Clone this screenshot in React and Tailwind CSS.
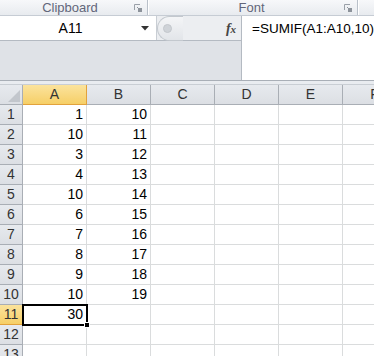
import React from 'react'

const font = { fontFamily: '"Liberation Sans", Arial, sans-serif' }

const cols = ['A', 'B', 'C', 'D', 'E', 'F']
const colA = [1, 10, 3, 4, 10, 6, 7, 8, 9, 10, 30]
const colB = [10, 11, 12, 13, 14, 15, 16, 17, 18, 19]

function Launcher() {
  return (
    <svg width="9" height="9" viewBox="0 0 9 9" className="shrink-0">
      <path d="M0.5 6V0.5H6" fill="none" stroke="#9aa0a8" />
      <rect x="4" y="4" width="4" height="4" fill="#8d939b" />
      <path d="M3 3L6 6" stroke="#8d939b" />
    </svg>
  )
}

function Ribbon() {
  return (
    <div className="flex h-[16px] bg-gradient-to-b from-[#f7f8fa] to-[#e8ebef] border-b border-[#c6ccd4] text-[13px] text-[#62667a]">
      <div className="w-[148px] shrink-0 flex items-center border-r border-[#b9c0c9]">
        <span className="flex-1 text-center leading-none pl-[6px]">Clipboard</span>
        <div className="mr-[4px] mt-[2px]"><Launcher /></div>
      </div>
      <div className="w-[1px] shrink-0 bg-white"></div>
      <div className="w-[209px] shrink-0 flex items-center border-r border-[#b9c0c9]">
        <span className="flex-1 text-center leading-none pl-[10px]">Font</span>
        <div className="mr-[4px] mt-[2px]"><Launcher /></div>
      </div>
      <div className="w-[1px] shrink-0 bg-white"></div>
      <div className="flex-1"></div>
    </div>
  )
}

function FormulaBar() {
  return (
    <div className="flex h-[65px] bg-[#dfe2e7] border-b border-[#a9afb7]">
      <div className="w-[241px] shrink-0 flex flex-col">
        <div className="flex h-[25px] border-b border-[#b4bac2]">
          <div className="w-[157px] bg-white flex items-center border-r border-[#c9ced4]">
            <span className="flex-1 text-center text-[14px] text-black">A11</span>
            <svg width="8" height="5" viewBox="0 0 8 5" className="mr-[7px]">
              <path d="M0 0H8L4 4.5Z" fill="#333" />
            </svg>
          </div>
          <div className="flex-1 flex items-center bg-[#eceef1]">
            <div className="h-[25px] w-[26px] rounded-l-full border-l border-y border-[#c3c8ce] bg-gradient-to-b from-[#f4f5f7] to-[#e2e5e9] flex items-center pl-[5px]">
              <div className="w-[9px] h-[9px] rounded-full bg-[#cfd3d8] border border-[#c3c7cc]"></div>
            </div>
            <div className="flex-1"></div>
            <div className="w-[18px] h-[22px] flex items-center justify-center mr-[1px]">
              <span className="text-[14px] italic font-bold text-[#444]" style={{ fontFamily: '"Liberation Serif", serif' }}>
                f<span className="text-[11px]">x</span>
              </span>
            </div>
          </div>
        </div>
        <div className="flex-1"></div>
      </div>
      <div className="flex-1 bg-white border-l border-[#b4bac2] pl-[10px] pt-[4px] text-[13.5px] text-black leading-[18px] whitespace-nowrap">
        =SUMIF(A1:A10,10)
      </div>
    </div>
  )
}

const headBase = 'h-[20px] shrink-0 flex items-center justify-center text-[14px] border-r border-b text-[#333] '
const headNormal = 'bg-gradient-to-b from-[#e7eaee] to-[#dcdfe4] border-[#a9aeb5]'
const headSel = 'bg-gradient-to-b from-[#fbe39c] to-[#f6cf66] border-[#e2a23c]'

function Grid() {
  const rows = Array.from({ length: 13 }, (_, i) => i + 1)
  return (
    <div className="relative">
      <div className="flex">
        <div className="w-[23px] shrink-0 h-[20px] bg-gradient-to-b from-[#e7eaee] to-[#dcdfe4] border-r border-b border-[#a9aeb5] flex items-end justify-end pr-[2px] pb-[2px]">
          <svg width="12" height="12" viewBox="0 0 12 12">
            <path d="M12 0V12H0Z" fill="#c2c6cc" />
          </svg>
        </div>
        {cols.map((c) => (
          <div key={c} className={headBase + 'w-[64px] ' + (c === 'A' ? headSel : headNormal)}>
            {c}
          </div>
        ))}
      </div>
      {rows.map((r) => (
        <div key={r} className="flex">
          <div className={headBase + 'w-[23px] ' + (r === 11 ? headSel : headNormal)}>{r}</div>
          {cols.map((c) => {
            let v = ''
            if (c === 'A' && colA[r - 1] !== undefined) v = colA[r - 1]
            if (c === 'B' && colB[r - 1] !== undefined) v = colB[r - 1]
            return (
              <div
                key={c}
                className="w-[64px] shrink-0 h-[20px] bg-white border-r border-b border-[#dadcdd] flex items-center justify-end pr-[3px] text-[14px] text-black"
              >
                {v}
              </div>
            )
          })}
        </div>
      ))}
      <div className="absolute left-[22px] top-[219px] w-[66px] h-[22px] border-2 border-black pointer-events-none"></div>
      <div className="absolute left-[84px] top-[237px] w-[6px] h-[6px] bg-black border border-white"></div>
    </div>
  )
}

export default function App() {
  return (
    <div className="w-[374px] h-[356px] overflow-hidden bg-white" style={font}>
      <Ribbon />
      <FormulaBar />
      <div className="h-[4px] bg-[#e9ecf0] border-b border-[#c9ced4]"></div>
      <Grid />
    </div>
  )
}
